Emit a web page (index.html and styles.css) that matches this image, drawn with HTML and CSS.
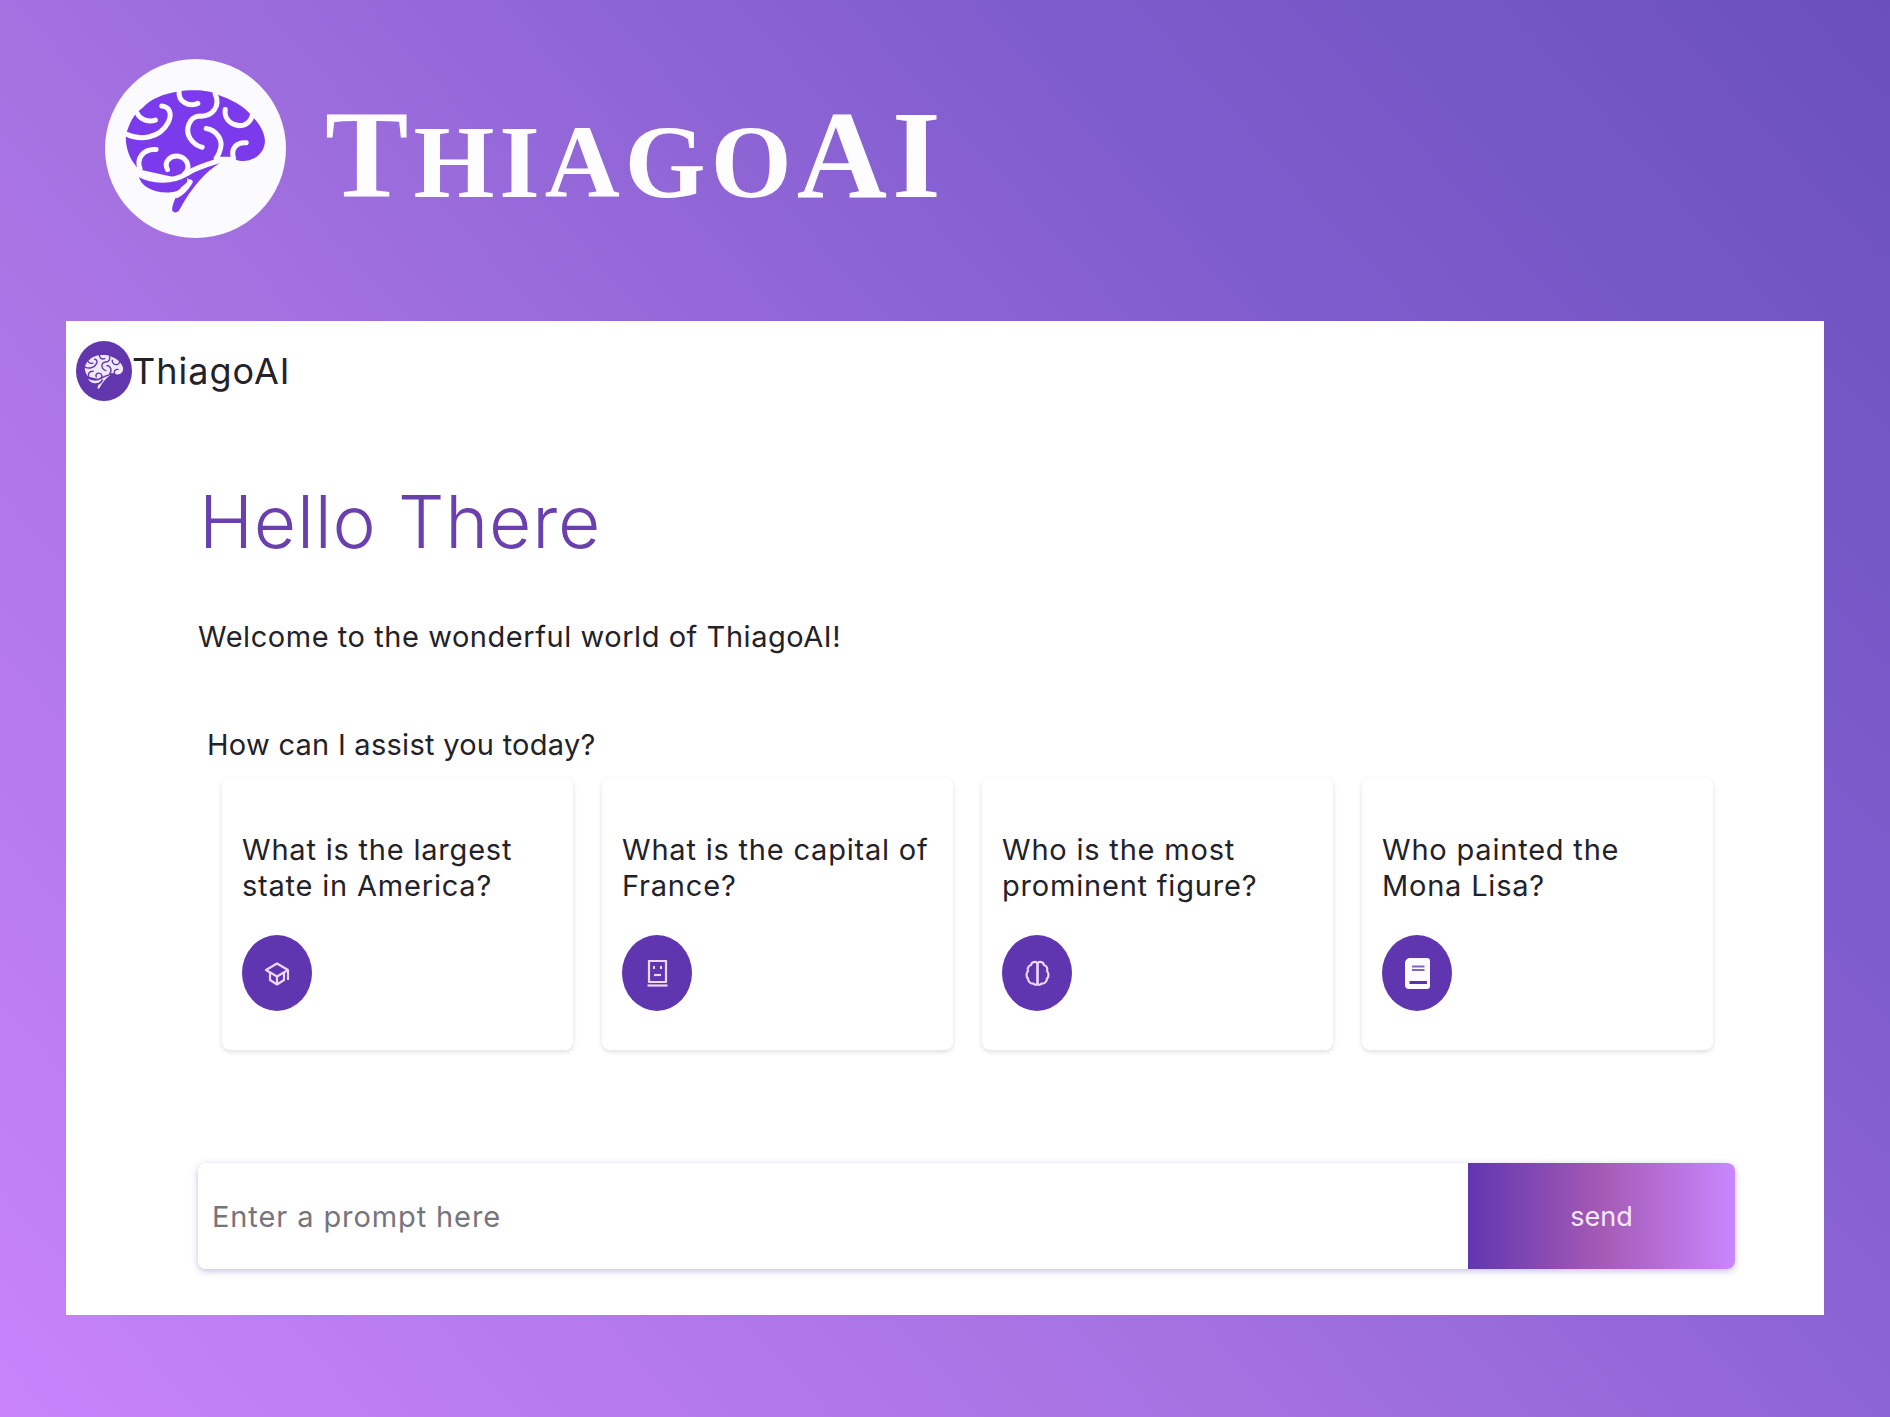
FILE: index.html
```html
<!DOCTYPE html>
<html lang="en">
<head>
  <meta charset="UTF-8">
  <meta name="viewport" content="width=device-width, initial-scale=1.0">
  <title>ThiagoAI</title>
  <link rel="stylesheet" href="styles.css">
</head>
<body>
  <svg class="defs" width="0" height="0" aria-hidden="true">
    <symbol id="brain" viewBox="75 57 542 536">
      <path class="brain-fill" d="M292 155C255 160 212 175 188 203C160 222 148 250 138 282C134 322 150 362 178 388L300 415L420 362L415 350H455C465 362 480 364 495 362C530 358 553 335 554 302C553 275 535 248 515 228C490 195 450 178 415 165C395 152 340 146 292 155Z"/>
      <path class="brain-fill" d="M175 405C182 440 222 460 272 456C288 455 298 450 304 440L322 425L320 405C270 428 215 425 175 405Z"/>
      <path class="brain-fill" d="M318 410C350 385 390 372 422 366C375 395 335 440 297 510C290 520 274 518 276 505C278 490 284 478 290 466C306 458 322 442 332 424Z"/>
      <g class="brain-line">
        <path d="M140 282C180 302 240 295 265 245C277 220 267 200 245 198"/>
        <path d="M172 220C180 240 208 246 226 240"/>
        <path d="M297 152C293 185 325 202 353 190"/>
        <path d="M405 162C422 200 395 230 360 228C325 230 314 270 330 295C340 310 350 318 366 321"/>
        <path d="M378 265C410 270 428 300 421 325C418 338 414 346 408 354"/>
        <path d="M435 208C430 240 460 262 490 255C505 250 512 240 516 226"/>
        <path d="M498 308C470 305 450 325 460 354"/>
        <path d="M228 328C190 325 168 355 180 385"/>
        <path d="M262 388C250 365 270 345 295 348C325 355 332 385 312 402"/>
        <path d="M172 400C220 428 280 425 320 400C350 380 390 370 428 358"/>
        <path d="M330 425C320 442 310 455 290 466"/>
      </g>
    </symbol>
  </svg>

  <header class="hero">
    <div class="hero-logo">
      <svg class="hero-brain"><use href="#brain"/></svg>
    </div>
    <div class="hero-title"><span class="big">T</span>hiago<span class="big">AI</span></div>
  </header>

  <div class="panel">
    <nav class="topbar">
      <div class="nav-logo">
        <svg class="nav-brain"><use href="#brain"/></svg>
      </div>
      <span class="nav-name">ThiagoAI</span>
    </nav>

    <main class="chat">
      <h1 class="hello">Hello There</h1>
      <p class="welcome">Welcome to the wonderful world of ThiagoAI!</p>
      <p class="assist">How can I assist you today?</p>

      <div class="cards">
        <div class="card">
          <p class="card-text">What is the largest state in America?</p>
          <div class="card-icon">
            <svg class="ico" viewBox="0 0 27 27">
              <path d="M2 10L13 3.500L24 10L13 16.500Z"/>
              <path d="M6 13V20L13 24.500L20 20V13"/>
              <path d="M13 16.500V24.500"/>
              <path d="M24 10V20"/>
            </svg>
          </div>
        </div>
        <div class="card">
          <p class="card-text">What is the capital of France?</p>
          <div class="card-icon">
            <svg class="ico" viewBox="0 0 27 27">
              <rect x="5" y="1" width="17" height="21"/>
              <path d="M3.500 25.500H23.500"/>
              <path class="ico-eyes" d="M9 7.500H11M16 7.500H18"/>
              <path d="M10 15H17"/>
            </svg>
          </div>
        </div>
        <div class="card">
          <p class="card-text">Who is the most prominent figure?</p>
          <div class="card-icon">
            <svg class="ico" viewBox="0 0 27 27">
              <path d="M13.500 3C11 1 7.500 2 7 5C4 6 3 9 4 11C2 13 2 17 4 18.500C4 22 7 24 9.500 23.500C11 25.500 13 25 13.500 24Z"/>
              <path d="M13.500 3C16 1 19.500 2 20 5C23 6 24 9 23 11C25 13 25 17 23 18.500C23 22 20 24 17.500 23.500C16 25.500 14 25 13.500 24Z"/>
            </svg>
          </div>
        </div>
        <div class="card">
          <p class="card-text">Who painted the Mona Lisa?</p>
          <div class="card-icon">
            <svg class="ico-book" viewBox="0 0 25 31">
              <path class="book" d="M5 0H22A3 3 0 0 1 25 3V28A3 3 0 0 1 22 31H4A4 4 0 0 1 0 27V5A5 5 0 0 1 5 0Z"/>
              <path class="book-line" d="M7 8.500H19.500M7 12H19.500"/>
              <path class="book-bar" d="M4.500 24.500H22"/>
            </svg>
          </div>
        </div>
      </div>

      <form class="prompt">
        <input class="prompt-input" type="text" placeholder="Enter a prompt here">
        <button class="prompt-send" type="button">send</button>
      </form>
    </main>
  </div>
</body>
</html>
```

FILE: styles.css
```css
body {
  margin: 0;
  width: 1890px;
  height: 1417px;
  overflow: hidden;
  font-family: Inter, "Noto Sans", sans-serif;
  color: #232229;
  background: linear-gradient(48deg, #c883fb 0%, #a672e2 38%, #7f5ccd 72%, #6a50bc 100%);
}
.defs {
  position: absolute;
}

/* big banner */
.hero {
  height: 321px;
  box-sizing: border-box;
  padding: 59px 0 0 105px;
  display: flex;
  gap: 39px;
}
.hero-logo {
  width: 181px;
  height: 179px;
  border-radius: 50%;
  background: #fbfaff;
  display: flex;
}
.hero-brain {
  width: 181px;
  height: 179px;
  --brain: #7c3aed;
  --line: #fbfaff;
}
.hero-title {
  margin-top: 46px;
  height: 100px;
  line-height: 100px;
  font-family: "Liberation Serif", serif;
  font-weight: 700;
  font-size: 104px;
  letter-spacing: 5px;
  text-transform: uppercase;
  color: #fdfcff;
  white-space: nowrap;
}
.big {
  font-size: 125px;
}

.brain-fill {
  fill: var(--brain);
}
.brain-line {
  fill: none;
  stroke: var(--line);
  stroke-width: 15;
  stroke-linecap: round;
}

/* white app panel */
.panel {
  margin: 0 66px;
  height: 994px;
  box-sizing: border-box;
  padding-top: 20px;
  background: #fff;
}
.topbar {
  display: flex;
  align-items: center;
  padding-left: 10px;
}
.nav-logo {
  width: 56px;
  height: 60px;
  border-radius: 50%;
  background: #6236ad;
  display: flex;
  align-items: center;
  justify-content: center;
}
.nav-brain {
  width: 50px;
  height: 52px;
  --brain: #efe8f7;
  --line: #6236ad;
}
.nav-name {
  font-size: 36px;
  letter-spacing: 1px;
}

.chat {
  padding: 0 89px 0 132px;
}
.hello {
  margin: 81px 0 0 1px;
  font-size: 73px;
  line-height: 80px;
  font-weight: 350;
  letter-spacing: 0.8px;
  color: #6a3fae;
}
.welcome {
  margin: 57px 0 0;
  font-size: 29px;
  line-height: 36px;
  letter-spacing: 0.55px;
}
.assist {
  margin: 72px 0 0 9px;
  font-size: 29px;
  line-height: 36px;
  letter-spacing: 0.27px;
}

.cards {
  margin: 15px 0 0 24px;
  display: flex;
  gap: 29px;
}
.card {
  flex: none;
  width: 351px;
  height: 272px;
  box-sizing: border-box;
  padding: 54px 20px 0;
  border-radius: 8px;
  background: #fff;
  box-shadow: 0 2px 5px rgba(0, 0, 0, 0.13);
}
.card-text {
  margin: 0;
  font-size: 29px;
  line-height: 36px;
  height: 72px;
  letter-spacing: 0.8px;
}
.card-icon {
  margin-top: 31px;
  width: 70px;
  height: 76px;
  border-radius: 50%;
  background: #6035b0;
  display: flex;
  align-items: center;
  justify-content: center;
}
.ico {
  width: 27px;
  height: 27px;
  fill: none;
  stroke: #ecd8fb;
  stroke-width: 2.200;
  stroke-linejoin: round;
}
.ico-eyes {
  stroke-width: 3;
}
.ico-book {
  width: 25px;
  height: 31px;
}
.book {
  fill: #fdfbff;
}
.book-line {
  stroke: #7e66c4;
  stroke-width: 2;
}
.book-bar {
  stroke: #5b35a8;
  stroke-width: 3;
}

/* prompt bar */
.prompt {
  margin-top: 113px;
  display: flex;
  height: 106px;
  border-radius: 8px;
  box-shadow: 0 2px 7px rgba(84, 70, 170, 0.35);
}
.prompt-input {
  flex: 1;
  min-width: 0;
  border: none;
  outline: none;
  padding: 0 0 0 14px;
  font-family: inherit;
  font-size: 29px;
  letter-spacing: 0.9px;
  background: #fff;
  border-radius: 8px 0 0 8px;
}
.prompt-input::placeholder {
  color: #77757c;
}
.prompt-send {
  flex: none;
  width: 267px;
  border: none;
  font-family: inherit;
  font-size: 27px;
  color: #f6e9fb;
  background: linear-gradient(90deg, #6136b0 0%, #a55ab5 50%, #c987ff 100%);
  border-radius: 0 8px 8px 0;
}
```
